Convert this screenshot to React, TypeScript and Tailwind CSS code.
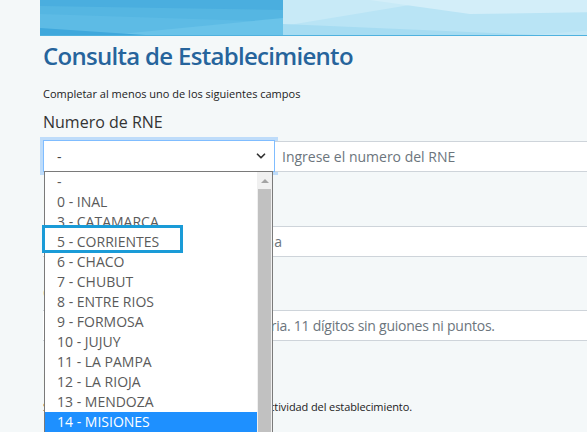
import { ChevronDown } from 'lucide-react'

const provincias = [
  '-',
  '0 - INAL',
  '3 - CATAMARCA',
  '5 - CORRIENTES',
  '6 - CHACO',
  '7 - CHUBUT',
  '8 - ENTRE RIOS',
  '9 - FORMOSA',
  '10 - JUJUY',
  '11 - LA PAMPA',
  '12 - LA RIOJA',
  '13 - MENDOZA',
  '14 - MISIONES',
]

const Banner = () => (
  <div className="relative h-[36px] overflow-hidden border-b border-[#4fb2df]">
    <svg className="absolute inset-0" width="700" height="36" viewBox="0 0 700 36" preserveAspectRatio="none">
      <rect x="0" y="0" width="243" height="36" fill="#55b6e2" />
      <polygon points="0,0 243,0 243,10 0,6" fill="#4aaedf" />
      <polygon points="0,14 243,22 243,36 0,36" fill="#5dbbe5" />
      <polygon points="60,36 243,18 243,36" fill="#6ac3e9" />
      <polygon points="0,28 120,36 0,36" fill="#3fa8dc" />
      <rect x="243" y="0" width="457" height="36" fill="#b9e4f5" />
      <polygon points="243,0 400,0 243,26" fill="#c8eaf7" />
      <polygon points="330,0 700,0 700,10 430,14" fill="#d3eef9" />
      <polygon points="243,36 243,24 520,36" fill="#a6dcf2" />
      <polygon points="480,36 700,18 700,36" fill="#c2e7f6" />
      <polygon points="630,36 700,26 700,36" fill="#9fd8f0" />
    </svg>
  </div>
)

const Dropdown = () => (
  <div className="absolute left-[44px] top-[171px] w-[229px] h-[280px] flex border border-[#7a7a7a] bg-white">
    <ul className="flex-1">
      {provincias.map((p) => (
        <li
          key={p}
          className={
            p === '14 - MISIONES'
              ? 'h-[20px] leading-[20px] pl-[12px] text-[14px] bg-[#1e90ff] text-white'
              : 'h-[20px] leading-[20px] pl-[12px] text-[14px] text-[#5a5a5a]'
          }>
          {p}
        </li>
      ))}
    </ul>
    <div className="w-[15px] bg-[#f0f0f0] flex flex-col items-center">
      <div className="h-[17px] flex items-center justify-center">
        <div className="w-0 h-0 border-l-[4px] border-r-[4px] border-b-[4px] border-l-transparent border-r-transparent border-b-[#a3a3a3]" />
      </div>
      <div className="w-[13px] flex-1 bg-[#c1c1c1]" />
    </div>
  </div>
)

export default function App() {
  return (
    <div className="relative h-[432px] overflow-hidden bg-[#f4f8f9] font-['Segoe_UI','Open_Sans',sans-serif] text-[#212529]">
      <div className="ml-[40px] w-[700px]">
        <Banner />
        <div className="pl-[3px]">
          <h1 className="mt-[5px] text-[24px] leading-[29px] font-semibold text-[#26649c] tracking-[-0.7px]">
            Consulta de Establecimiento
          </h1>
          <p className="mt-[16px] text-[11px] leading-[15px] text-[#222]">
            Completar al menos uno de los siguientes campos
          </p>
          <label className="block mt-[9px] text-[16px] leading-[24px] text-[#333]">
            Numero de RNE
          </label>
          <div className="flex mt-[6px] items-center">
            <div className="w-[232px] h-[32px] flex items-center justify-between pl-[13px] pr-[6px] bg-white border border-[#80bdff] shadow-[0_0_0_3px_rgba(0,123,255,0.22)] text-[14px] text-[#444]">
              <span>-</span>
              <ChevronDown size={14} strokeWidth={3} className="text-[#333]" />
            </div>
            <div className="flex-1 h-[31px] flex items-center pl-[7px] bg-white border-y border-[#ced4da] text-[14px] text-[#6c757d]">
              Ingrese el numero del RNE
            </div>
          </div>
          <label className="block mt-[18px] text-[16px] leading-[24px] text-[#333]">
            Razón Social
          </label>
          <div className="mt-[12px] h-[31px] flex items-center pl-[13px] bg-white border-y border-[#ced4da] text-[14px] text-[#6c757d] tracking-[0.25px]">
            Ingrese la razón social de la firma
          </div>
          <label className="block mt-[24px] text-[16px] leading-[24px] text-[#333]">
            CUIT
          </label>
          <div className="mt-[5px] h-[31px] flex items-center pl-[13px] bg-white border-y border-[#ced4da] text-[14px] text-[#6c757d] tracking-[-0.25px]">
            Ingrese CUIT de empresa propietaria. 11 dígitos sin guiones ni puntos.
          </div>
          <label className="block mt-[27px] text-[16px] leading-[24px] text-[#333]">
            Rubro
          </label>
          <p className="mt-[7px] text-[11px] leading-[15px] text-[#222] tracking-[-0.1px]">
            Seleccione el rubro que corresponda con la actividad del establecimiento.
          </p>
          <p className="mt-[14px] pl-[10px] text-[14px] leading-[20px] text-[#6c757d]">
            Ingrese el nombre de la localidad del establecimiento o del partido que corresponda
          </p>
        </div>
      </div>
      <Dropdown />
      <div className="absolute left-[42px] top-[225px] w-[141px] h-[28px] border-[3px] border-[#1a9bd7]" />
    </div>
  )
}
